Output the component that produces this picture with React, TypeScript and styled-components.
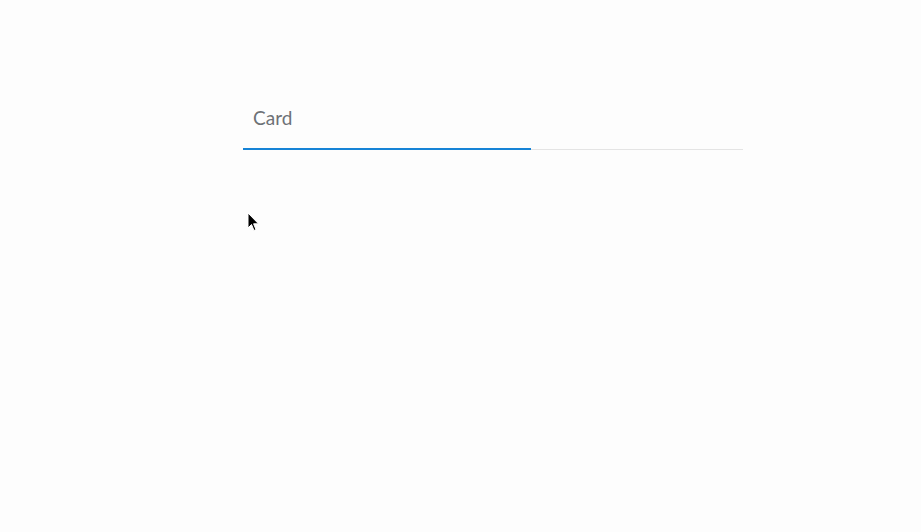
import styled, { createGlobalStyle } from 'styled-components';

const GlobalStyle = createGlobalStyle`
  html, body {
    margin: 0;
    padding: 0;
    background: #fdfdfd;
  }
  body {
    font-family: Lato, "Open Sans", sans-serif;
  }
`;

const Page = styled.div`
  position: relative;
  width: 921px;
  height: 532px;
  padding-top: 96px;
  padding-left: 243px;
  box-sizing: border-box;
`;

const TabBar = styled.div`
  width: 500px;
  display: flex;
  border-bottom: 1px solid #e4e4e4;
`;

const Tab = styled.div<{ $active?: boolean; $width: number }>`
  width: ${(p) => p.$width}px;
  box-sizing: border-box;
  padding: 10px 10px 18px;
  font-size: 19px;
  line-height: 24px;
  color: #6d7176;
  margin-bottom: -1px;
  border-bottom: 2px solid ${(p) => (p.$active ? '#1683d6' : 'transparent')};
`;

const Cursor = styled.svg`
  position: absolute;
  left: 247px;
  top: 212px;
`;

const App = () => {
  return (
    <Page>
      <GlobalStyle />
      <TabBar>
        <Tab $active $width={288}>
          Card
        </Tab>
      </TabBar>
      <Cursor width="14" height="22" viewBox="0 0 14 22">
        <path
          d="M1 1 L1 16 L4.5 12.5 L7 18.5 L9 17.6 L6.6 11.8 L11.5 11.8 Z"
          fill="#000"
          stroke="#fff"
          strokeWidth="1"
        />
      </Cursor>
    </Page>
  );
};

export default App;
